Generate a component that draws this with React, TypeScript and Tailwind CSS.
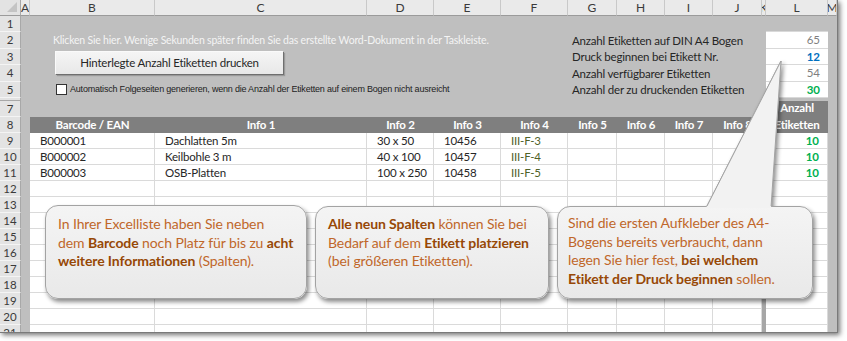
import React from 'react';

const HDR_LETTERS = ['A', 'B', 'C', 'D', 'E', 'F', 'G', 'H', 'I', 'J', 'K', 'L', 'M'];

const data: string[][] = [
  ['B000001', 'Dachlatten 5m', '30 x 50', '10456', 'III-F-3', '10'],
  ['B000002', 'Keilbohle 3 m', '40 x 100', '10457', 'III-F-4', '10'],
  ['B000003', 'OSB-Platten', '100 x 250', '10458', 'III-F-5', '10'],
];

function RowHead({ label }: { label: string }) {
  return (
    <div className="flex items-center justify-center border-b border-r border-b-[#f4f4f4] border-r-[#a8a8a8] bg-[#e3e3e3] text-[11.5px] leading-none text-[#3a3a3a]">
      {label}
    </div>
  );
}

function Gray() {
  return <div className="bg-[#bfbfbf]" />;
}

function Cell({ children, kind }: { children?: React.ReactNode; kind?: 'green' | 'num' }) {
  if (kind === 'num') {
    return (
      <div className="flex items-center justify-end overflow-hidden whitespace-nowrap border-b border-r border-[#dadada] bg-white pr-[8px] text-[11.5px] font-bold text-[#00b050]">
        {children}
      </div>
    );
  }
  return (
    <div
      className={
        'flex items-center overflow-hidden whitespace-nowrap border-b border-r border-[#dadada] bg-white pl-[10px] text-[11.5px] tracking-[-0.2px] ' +
        (kind === 'green' ? 'text-[#4f6228]' : 'text-[#262626]')
      }
    >
      {children}
    </div>
  );
}

function HeadCell({ children }: { children?: React.ReactNode }) {
  return (
    <div className="flex items-center justify-center whitespace-nowrap bg-[#7f7f7f] text-[11.5px] font-bold tracking-[-0.2px] text-white">
      {children}
    </div>
  );
}

function Label({ children }: { children: React.ReactNode }) {
  return (
    <div className="col-span-4 flex items-center whitespace-nowrap bg-[#bfbfbf] pl-[4px] text-[11.5px] tracking-[-0.2px] text-[#262626]">
      {children}
    </div>
  );
}

function Value({ children, cls }: { children: React.ReactNode; cls: string }) {
  return (
    <div className={'flex items-center justify-end border-b border-[#d9d9d9] bg-white pr-[8px] text-[11.5px] ' + cls}>
      {children}
    </div>
  );
}

function Bubble({ className, children }: { className: string; children: React.ReactNode }) {
  return (
    <div
      className={
        'absolute rounded-[13px] border border-[#a3a3a3] bg-gradient-to-b from-[#f4f4f4] to-[#e9e9e9] text-[14px] leading-[18.5px] tracking-[-0.1px] text-[#c0672a] shadow-[2px_3px_4px_rgba(0,0,0,0.45)] ' +
        className
      }
    >
      {children}
    </div>
  );
}

function B({ children }: { children: React.ReactNode }) {
  return <span className="font-bold text-[#974806]">{children}</span>;
}

function Tail({ shadow }: { shadow: boolean }) {
  return (
    <svg
      width="90"
      height="160"
      viewBox="0 0 90 160"
      className={'absolute left-[700px] top-[55px] ' + (shadow ? 'drop-shadow-[2px_2px_2px_rgba(0,0,0,0.45)]' : '')}
    >
      <polygon points="81,6 6,153 71,153" fill="#f2f2f2" />
      <line x1="81" y1="6" x2="7" y2="151" stroke="#a3a3a3" strokeWidth="1" />
      <line x1="81" y1="6" x2="71.1" y2="151" stroke="#a3a3a3" strokeWidth="1" />
    </svg>
  );
}

export default function App() {
  const dataRows = Array.from({ length: 13 }, (_, i) => i);
  return (
    <div className="h-[341px] w-[847px] overflow-hidden bg-white [font-family:Lato,sans-serif]">
      <div className="relative h-[333px] w-[838px] overflow-hidden border-b border-r border-[#7a7a7a] shadow-[2px_2px_5px_rgba(0,0,0,0.55)]">
        <div className="grid grid-cols-[21px_9px_125px_212px_67px_67px_67px_49px_48px_48px_49px_4px_62px_9px] grid-rows-[16px_repeat(5,16.4px)_2.6px_16.5px_repeat(14,16px)]">
          {/* column header */}
          <div className="relative border-b border-r border-b-[#9b9b9b] border-r-[#a8a8a8] bg-[#e3e3e3]">
            <svg width="11" height="11" className="absolute bottom-[2px] right-[2px]">
              <polygon points="10,0 10,10 0,10" fill="#c4c4c4" />
            </svg>
          </div>
          {HDR_LETTERS.map((l) => (
            <div
              key={l}
              className="flex items-center justify-center overflow-hidden border-b border-r border-b-[#9b9b9b] border-r-[#c9c9c9] bg-[#eaeaea] text-[12px] leading-none text-[#3a3a3a]"
            >
              {l}
            </div>
          ))}

          {/* row 1 */}
          <RowHead label="1" />
          <Gray />
          <div className="col-span-9 bg-[#bfbfbf]" />
          <Gray />
          <div className="border-b border-[#d9d9d9] bg-[#bfbfbf]" />
          <Gray />

          {/* row 2 */}
          <RowHead label="2" />
          <Gray />
          <div className="col-span-5 flex items-center whitespace-nowrap bg-[#bfbfbf] pl-[23px] text-[10.5px] tracking-[-0.2px] text-[#f4f4f4]">
            Klicken Sie hier. Wenige Sekunden später finden Sie das erstellte Word-Dokument in der Taskleiste.
          </div>
          <Label>Anzahl Etiketten auf DIN A4 Bogen</Label>
          <Gray />
          <Value cls="text-[#7f7f7f]">65</Value>
          <Gray />

          {/* row 3 */}
          <RowHead label="3" />
          <Gray />
          <div className="col-span-2 row-span-2 bg-[#bfbfbf] pl-[25px] pt-[2px]">
            <div className="flex h-[23px] w-[228px] items-center justify-center border-l border-t border-[#fafafa] bg-gradient-to-b from-[#f5f5f5] to-[#e8e8e8] text-[11.5px] tracking-[-0.2px] text-[#262626] shadow-[1px_1px_0_#6f6f6f,2px_2px_1px_#9a9a9a]">
              Hinterlegte Anzahl Etiketten drucken
            </div>
          </div>
          <div className="col-span-3 bg-[#bfbfbf]" />
          <Label>Druck beginnen bei Etikett Nr.</Label>
          <Gray />
          <Value cls="font-bold text-[#0070c0]">12</Value>
          <Gray />

          {/* row 4 */}
          <RowHead label="4" />
          <Gray />
          <div className="col-span-3 bg-[#bfbfbf]" />
          <Label>Anzahl verfügbarer Etiketten</Label>
          <Gray />
          <Value cls="text-[#7f7f7f]">54</Value>
          <Gray />

          {/* row 5 */}
          <RowHead label="5" />
          <Gray />
          <div className="col-span-5 flex items-center whitespace-nowrap bg-[#bfbfbf] pl-[26px]">
            <div className="mr-[3px] h-[11px] w-[11px] border border-[#333] bg-white" />
            <span className="text-[9px] tracking-[-0.2px] text-[#222] [font-family:'Liberation_Sans',Arial,sans-serif]">
              Automatisch Folgeseiten generieren, wenn die Anzahl der Etiketten auf einem Bogen nicht ausreicht
            </span>
          </div>
          <Label>Anzahl der zu druckenden Etiketten</Label>
          <Gray />
          <Value cls="font-bold text-[#00b050]">30</Value>
          <Gray />

          {/* row 6 (hidden) */}
          <div className="border-b border-r border-b-[#a8a8a8] border-r-[#a8a8a8] bg-[#e3e3e3]" />
          <div className="col-span-13 bg-[#bfbfbf]" />

          {/* row 7 */}
          <RowHead label="7" />
          <Gray />
          <div className="col-span-9 bg-[#bfbfbf]" />
          <Gray />
          <div className="row-span-2 flex flex-col items-center justify-center bg-[#7f7f7f] text-[11.5px] font-bold leading-[16.5px] tracking-[-0.2px] text-white">
            <span>Anzahl</span>
            <span>Etiketten</span>
          </div>
          <Gray />

          {/* row 8 header */}
          <RowHead label="8" />
          <Gray />
          <HeadCell>Barcode / EAN</HeadCell>
          <HeadCell>Info 1</HeadCell>
          <HeadCell>Info 2</HeadCell>
          <HeadCell>Info 3</HeadCell>
          <HeadCell>Info 4</HeadCell>
          <HeadCell>Info 5</HeadCell>
          <HeadCell>Info 6</HeadCell>
          <HeadCell>Info 7</HeadCell>
          <HeadCell>Info 8</HeadCell>
          <div className="bg-[#7f7f7f]" />
          <Gray />

          {/* data rows 9-21 */}
          {dataRows.map((i) => {
            const d = data[i];
            return (
              <React.Fragment key={i}>
                <RowHead label={String(9 + i)} />
                <Gray />
                <Cell>{d?.[0]}</Cell>
                <Cell>{d?.[1]}</Cell>
                <Cell>{d?.[2]}</Cell>
                <Cell>{d?.[3]}</Cell>
                <Cell kind="green">{d?.[4]}</Cell>
                <Cell />
                <Cell />
                <Cell />
                <Cell />
                <div className="bg-[#a6a6a6]" />
                <Cell kind="num">{d?.[5]}</Cell>
                <Gray />
              </React.Fragment>
            );
          })}
        </div>

        {/* callouts */}
        <Bubble className="left-[45px] top-[205px] h-[94px] w-[262px] pl-[12px] pt-[9px]">
          In Ihrer Excelliste haben Sie neben
          <br />
          dem <B>Barcode</B> noch Platz für bis zu <B>acht</B>
          <br />
          <B>weitere Informationen</B> (Spalten).
        </Bubble>
        <Bubble className="left-[315px] top-[206px] h-[93px] w-[234px] pl-[12px] pt-[8px]">
          <B>Alle neun Spalten</B> können Sie bei
          <br />
          Bedarf auf dem <B>Etikett platzieren</B>
          <br />
          (bei größeren Etiketten).
        </Bubble>
        <Tail shadow />
        <Bubble className="left-[557px] top-[206px] h-[93px] w-[256px] pl-[10px] pt-[7px]">
          Sind die ersten Aufkleber des A4-
          <br />
          Bogens bereits verbraucht, dann
          <br />
          legen Sie hier fest, <B>bei welchem</B>
          <br />
          <B>Etikett der Druck beginnen</B> sollen.
        </Bubble>
        <Tail shadow={false} />
      </div>
    </div>
  );
}
